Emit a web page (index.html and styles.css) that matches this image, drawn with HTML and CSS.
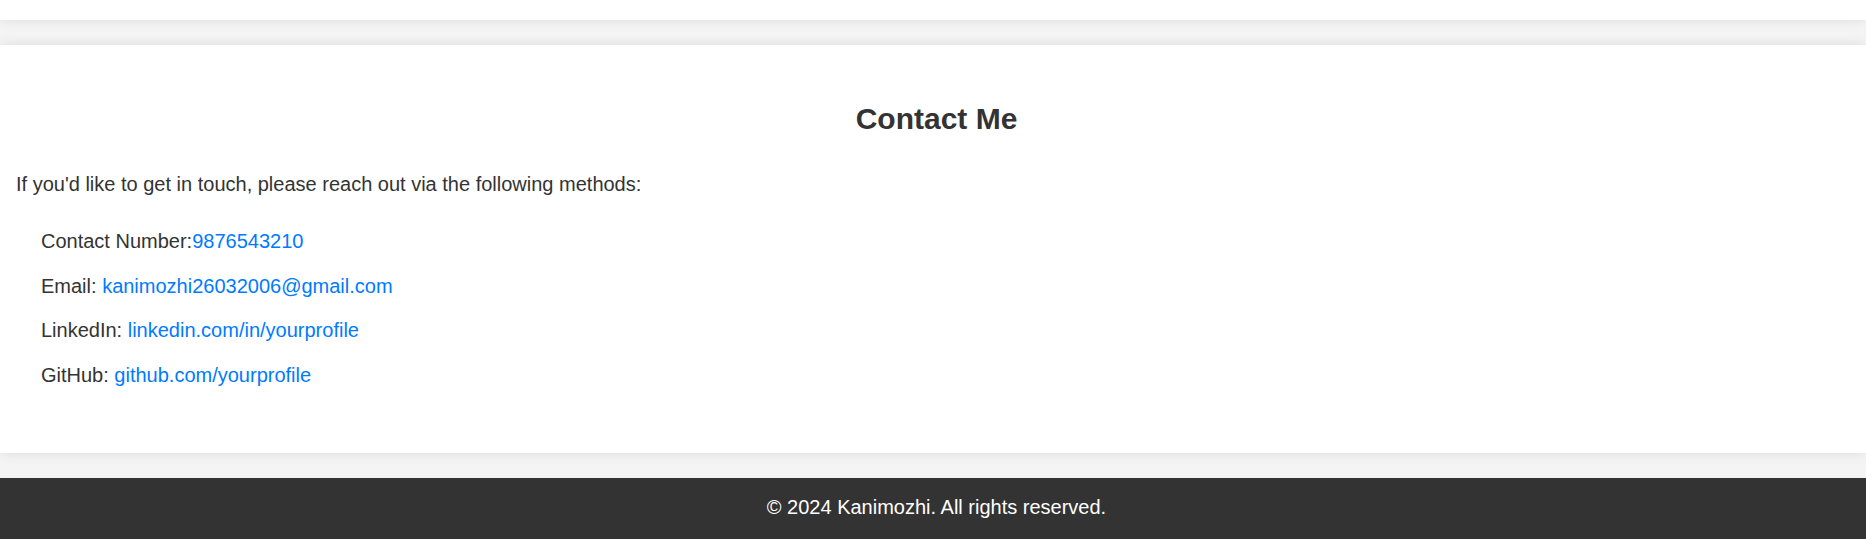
FILE: index.html
```html
<!DOCTYPE html>
<html lang="en">
<head>
<meta charset="utf-8">
<title>Contact</title>
<link rel="stylesheet" href="styles.css">
</head>
<body>
<main class="main">
  <section class="card card-prev"></section>
  <section class="card contact">
    <h2 class="contact-title">Contact Me</h2>
    <p class="contact-intro">If you'd like to get in touch, please reach out via the following methods:</p>
    <ul class="contact-list">
      <li>Contact Number:<a href="#">9876543210</a></li>
      <li>Email: <a href="#">kanimozhi26032006@gmail.com</a></li>
      <li>LinkedIn: <a href="#">linkedin.com/in/yourprofile</a></li>
      <li>GitHub: <a href="#">github.com/yourprofile</a></li>
    </ul>
  </section>
</main>
<footer class="footer">
  <p class="footer-text">&copy; 2024 Kanimozhi. All rights reserved.</p>
</footer>
</body>
</html>
```
FILE: styles.css
```css
html, body {
  margin: 0;
  padding: 0;
}
body {
  background: #f4f4f4;
  color: #333;
  font-family: "Liberation Sans", Arial, sans-serif;
  font-size: 20px;
}
.main {
  display: flex;
  flex-direction: column;
  gap: 25px;
  padding-bottom: 25px;
}
.card {
  background: #fff;
  box-shadow: 0 0 12px rgba(0, 0, 0, 0.1);
}
.card-prev {
  height: 20px;
}
.contact {
  padding: 25px 15px 25px 16px;
  height: 408px;
  box-sizing: border-box;
}
.contact-title {
  margin: 32px 0 37px;
  padding-left: 6px;
  font-size: 30px;
  line-height: 34px;
  text-align: center;
  color: #333;
}
.contact-intro {
  margin: 0;
  line-height: 23px;
}
.contact-list {
  list-style: none;
  margin: 29px 0 0;
  padding: 0 0 0 25px;
}
.contact-list li {
  line-height: 32px;
  margin-bottom: 12.5px;
}
.contact-list a {
  color: #007bff;
  text-decoration: none;
}
.footer {
  background: #333;
  color: #fff;
  text-align: center;
  padding: 12.5px 0 16.5px 7px;
}
.footer-text {
  margin: 0;
  line-height: 32px;
}
```
